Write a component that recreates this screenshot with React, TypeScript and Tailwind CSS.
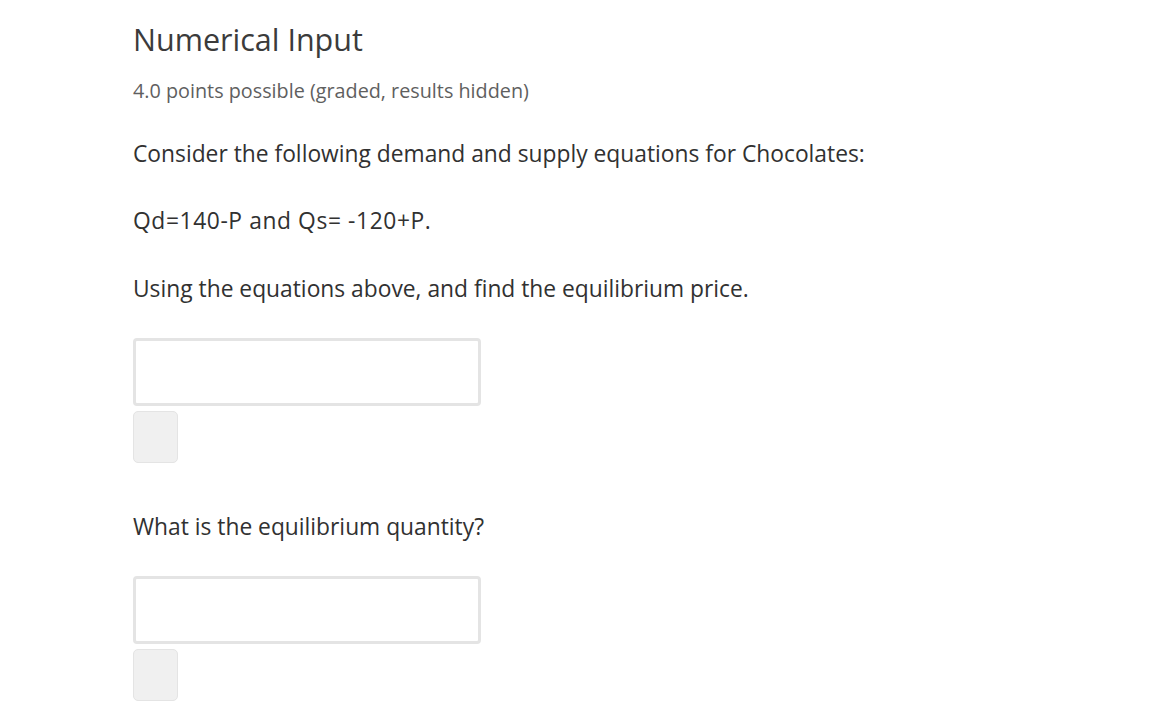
export default function App() {
  const font = { fontFamily: '"Open Sans", "Noto Sans", sans-serif' };
  return (
    <div className="min-h-screen bg-white pl-[133px] pt-[19px]" style={font}>
      <h2 className="text-[30.5px] leading-[40px] font-normal text-[#3b3b3b]">Numerical Input</h2>
      <div className="mt-[18px] text-[19.8px] leading-[28px] text-[#5f5f5f]">
        4.0 points possible (graded, results hidden)
      </div>

      <p className="mt-[34px] text-[22.8px] leading-[30px] text-[#313131]">
        Consider the following demand and supply equations for Chocolates:
      </p>
      <p className="mt-[37px] text-[22.8px] leading-[30px] tracking-[0.6px] text-[#313131]">
        Qd=140-P and Qs= -120+P.
      </p>
      <p className="mt-[38px] text-[22.8px] leading-[30px] text-[#313131]">
        Using the equations above, and find the equilibrium price.
      </p>

      <input
        type="text"
        className="mt-[34px] block h-[68px] w-[348px] rounded-[4px] border-[3px] border-[#e4e4e4] bg-white outline-none"
      />
      <div className="mt-[5px] h-[52px] w-[45px] rounded-[5px] border border-[#e4e4e4] bg-[#f0f0f0]" />

      <p className="mt-[49px] text-[22.8px] leading-[30px] text-[#313131]">What is the equilibrium quantity?</p>

      <input
        type="text"
        className="mt-[34px] block h-[68px] w-[348px] rounded-[4px] border-[3px] border-[#e4e4e4] bg-white outline-none"
      />
      <div className="mt-[5px] h-[52px] w-[45px] rounded-[5px] border border-[#e4e4e4] bg-[#f0f0f0]" />
    </div>
  );
}
